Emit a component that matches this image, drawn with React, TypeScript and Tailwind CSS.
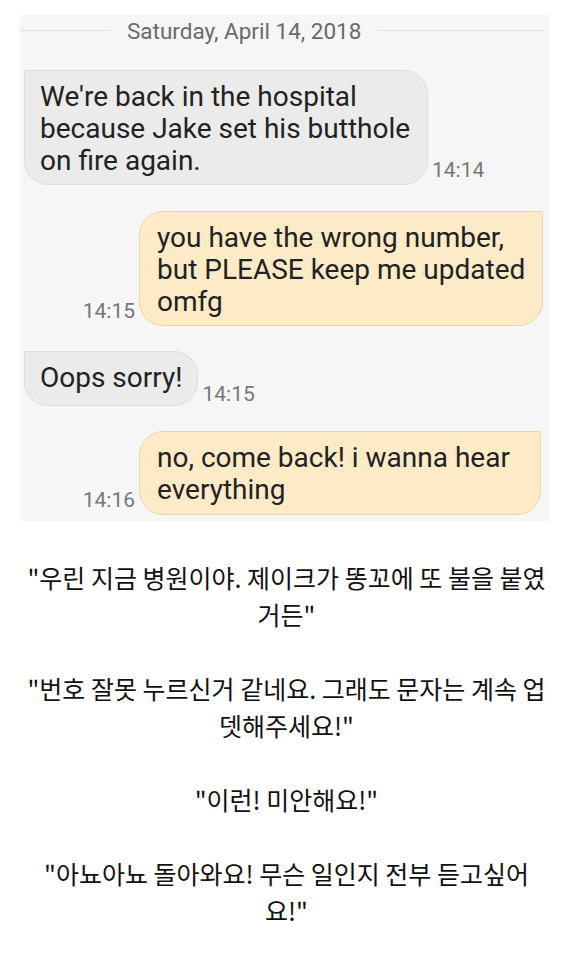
import React from "react";

const roboto = { fontFamily: "Roboto, 'Liberation Sans', sans-serif" };

function Time({ children }: { children: React.ReactNode }) {
  return (
    <span className="text-[21px] leading-[24px] text-[#767676] whitespace-nowrap" style={roboto}>
      {children}
    </span>
  );
}

export default function App() {
  return (
    <div className="w-[569px] h-[960px] bg-white overflow-hidden">
      {/* chat screenshot panel */}
      <div
        className="ml-[20px] mt-[15px] w-[530px] h-[506px] bg-[#f6f6f6] flex flex-col"
        style={roboto}
      >
        {/* date separator */}
        <div className="h-[31px] flex items-center pr-[5px]">
          <div className="w-[90px] h-px bg-[#e2e2e2]" />
          <span className="mx-[17px] text-[22.5px] leading-[26px] text-[#6a6a6a] whitespace-nowrap">
            Saturday, April 14, 2018
          </span>
          <div className="flex-1 h-px bg-[#e2e2e2]" />
        </div>

        {/* incoming 1 */}
        <div className="mt-[24px] pl-[4px] flex items-end">
          <div className="w-[404px] bg-[#ebebeb] border border-[#dcdcdc] rounded-[24px] rounded-tl-[2px] pl-[15px] pt-[10px] pb-[7px] text-[28px] leading-[32px] text-[#222] whitespace-nowrap">
            We're back in the hospital
            <br />
            because Jake set his butthole
            <br />
            on fire again.
          </div>
          <div className="ml-[4px] mb-[1px]">
            <Time>14:14</Time>
          </div>
        </div>

        {/* outgoing 1 */}
        <div className="mt-[26px] pr-[7px] flex items-end justify-end">
          <div className="mr-[4px] mb-[1px]">
            <Time>14:15</Time>
          </div>
          <div className="w-[404px] bg-[#fdebc7] border border-[#ead6a2] rounded-[24px] rounded-tr-[2px] pl-[17px] pt-[10px] pb-[7px] text-[28px] leading-[32px] text-[#222] whitespace-nowrap">
            you have the wrong number,
            <br />
            but PLEASE keep me updated
            <br />
            omfg
          </div>
        </div>

        {/* incoming 2 */}
        <div className="mt-[25px] pl-[4px] flex items-end">
          <div className="bg-[#ebebeb] border border-[#dcdcdc] rounded-[24px] rounded-tl-[2px] pl-[15px] pr-[15px] pt-[10px] pb-[11px] text-[28px] leading-[32px] text-[#222] whitespace-nowrap">
            Oops sorry!
          </div>
          <div className="ml-[4px] mb-[-2px]">
            <Time>14:15</Time>
          </div>
        </div>

        {/* outgoing 2 */}
        <div className="mt-[25px] pr-[9px] flex items-end justify-end">
          <div className="mr-[4px] mb-[1px]">
            <Time>14:16</Time>
          </div>
          <div className="w-[402px] bg-[#fdebc7] border border-[#ead6a2] rounded-[24px] rounded-tr-[2px] pl-[17px] pt-[10px] pb-[8px] text-[28px] leading-[32px] text-[#222] whitespace-nowrap">
            no, come back! i wanna hear
            <br />
            everything
          </div>
        </div>
      </div>

      {/* Korean translation */}
      <div
        className="pt-[38px] pl-[4px] text-center text-[25px] leading-[37px] text-[#111] whitespace-nowrap"
        style={{ fontFamily: "'Noto Sans CJK KR', 'Noto Sans', sans-serif" }}
      >
        <p className="mb-[37px]">
          "우린 지금 병원이야. 제이크가 똥꼬에 또 불을 붙였
          <br />
          거든"
        </p>
        <p className="mb-[37px]">
          "번호 잘못 누르신거 같네요. 그래도 문자는 계속 업
          <br />
          뎃해주세요!"
        </p>
        <p className="mb-[37px]">"이런! 미안해요!"</p>
        <p>
          "아뇨아뇨 돌아와요! 무슨 일인지 전부 듣고싶어
          <br />
          요!"
        </p>
      </div>
    </div>
  );
}
